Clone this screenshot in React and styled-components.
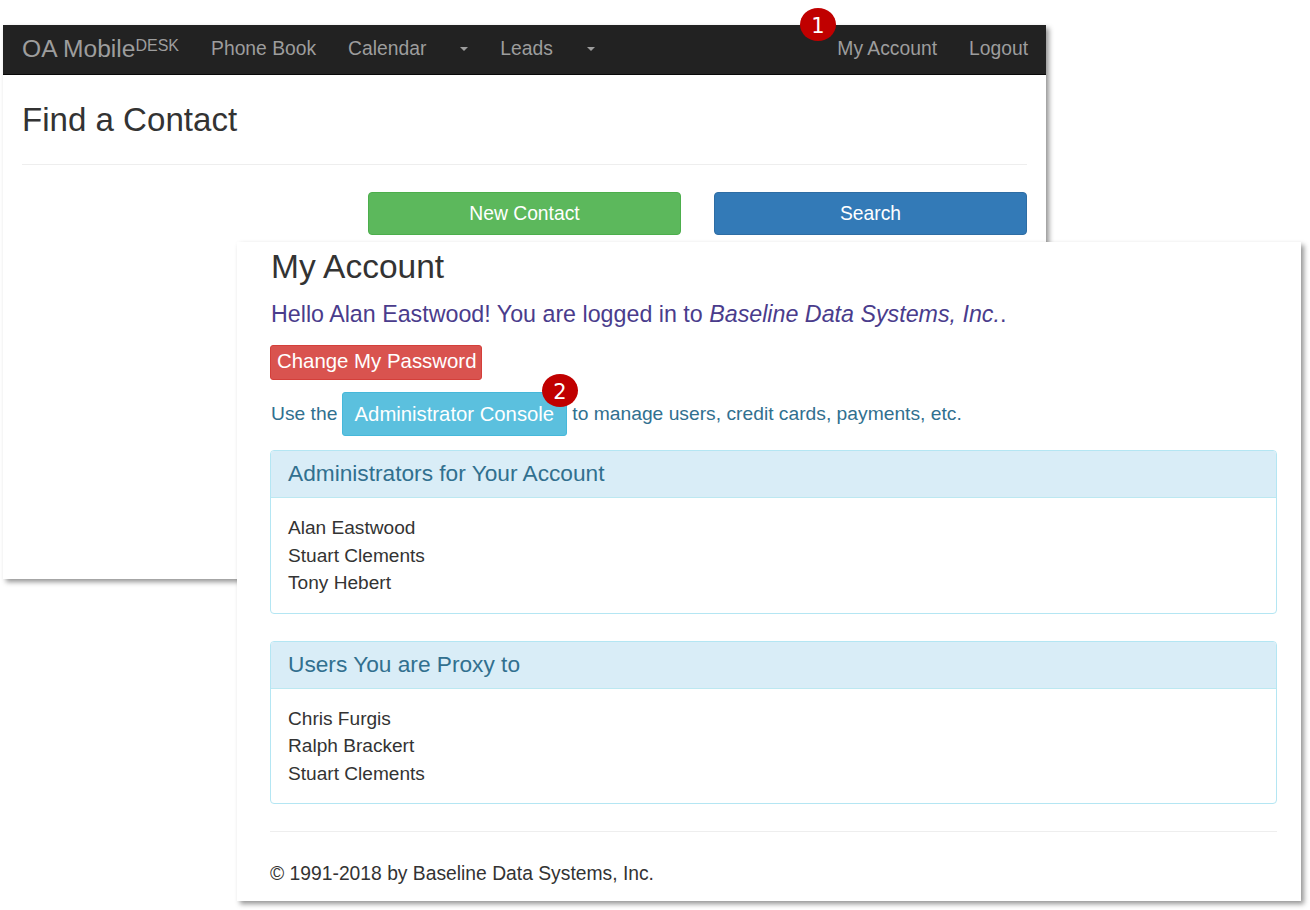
import React from "react";
import styled, { createGlobalStyle } from "styled-components";

const GlobalStyle = createGlobalStyle`
  html, body {
    margin: 0;
    padding: 0;
    background: #fff;
  }
  body {
    font-family: "Liberation Sans", Arial, sans-serif;
    color: #333;
  }
`;

const Desktop = styled.div`
  position: relative;
  width: 1310px;
  height: 910px;
  overflow: hidden;
  background: #fff;
`;

const BackWindow = styled.div`
  position: absolute;
  left: 3px;
  top: 25px;
  width: 1043px;
  height: 554px;
  background: #fff;
  box-shadow: 3px 3px 5px rgba(0, 0, 0, 0.42);
`;

const FrontWindow = styled.div`
  position: absolute;
  left: 237px;
  top: 242px;
  width: 1064px;
  height: 659px;
  box-sizing: border-box;
  padding: 5px 24px 0 33px;
  background: #fff;
  box-shadow: 3px 3px 5px rgba(0, 0, 0, 0.42);
`;

const Navbar = styled.nav`
  display: flex;
  align-items: center;
  height: 50px;
  box-sizing: border-box;
  padding: 0 18px 2px 19px;
  background: #222;
  border-bottom: 1px solid #080808;
`;

const Brand = styled.span`
  font-size: 24.6px;
  color: #9d9d9d;
  margin-right: 32px;

  sup {
    font-size: 16px;
    line-height: 0;
    vertical-align: 6px;
  }
`;

const NavLink = styled.span`
  font-size: 19.3px;
  color: #9d9d9d;
  margin-left: ${(props) => props.$gap || 0}px;
`;

const Caret = styled.span`
  width: 0;
  height: 0;
  margin-left: 34px;
  margin-right: 32px;
  border-top: 4px solid #9d9d9d;
  border-left: 4px solid transparent;
  border-right: 4px solid transparent;
`;

const Spacer = styled.div`
  flex: 1;
`;

const BackBody = styled.div`
  padding: 0 19px;
`;

const PageHeader = styled.h1`
  margin: 0;
  height: 90px;
  box-sizing: border-box;
  padding-top: 27px;
  font-size: 33.1px;
  line-height: 36px;
  font-weight: 400;
  color: #333;
  border-bottom: 1px solid #eee;
`;

const ButtonRow = styled.div`
  display: flex;
  justify-content: flex-end;
  gap: 33px;
  margin-top: 27px;
`;

const WideButton = styled.div`
  width: 313px;
  height: 43px;
  box-sizing: border-box;
  display: flex;
  align-items: center;
  justify-content: center;
  font-size: 19.3px;
  color: #fff;
  border-radius: 4px;
  background: ${(props) => props.$bg};
  border: 1px solid ${(props) => props.$border};
`;

const Heading = styled.h2`
  margin: 0 0 0 1px;
  font-size: 33.5px;
  line-height: 40px;
  font-weight: 400;
  color: #333;
`;

const Lead = styled.p`
  margin: 13px 0 0 1px;
  font-size: 23.25px;
  line-height: 28px;
  color: #4a3c8c;
`;

const DangerButton = styled.div`
  width: 212px;
  height: 35px;
  margin-top: 17px;
  padding-left: 6px;
  line-height: 31px;
  box-sizing: border-box;
  white-space: nowrap;
  font-size: 20.4px;
  color: #fff;
  background: #d9534f;
  border: 1px solid #d43f3a;
  border-radius: 3px;
`;

const ConsoleRow = styled.div`
  display: flex;
  align-items: center;
  gap: 5px;
  margin: 12px 0 0 1px;
  font-size: 19.25px;
  color: #31708f;
`;

const ConsoleButton = styled.div`
  display: flex;
  align-items: center;
  justify-content: center;
  width: 225px;
  height: 44px;
  box-sizing: border-box;
  padding-right: 1px;
  font-size: 20.3px;
  color: #fff;
  background: #5bc0de;
  border: 1px solid #46b8da;
  border-radius: 3px;
`;

const Panel = styled.section`
  margin-top: ${(props) => props.$top}px;
  border: 1px solid #b4e6f3;
  border-radius: 4px;
  overflow: hidden;
`;

const PanelHeading = styled.div`
  height: 47px;
  box-sizing: border-box;
  padding: 0 17px 1px;
  display: flex;
  align-items: center;
  font-size: 22.7px;
  color: #31708f;
  background: #d9edf7;
  border-bottom: 1px solid #bce8f1;
`;

const PanelBody = styled.div`
  padding: 16px 17px 16px;
  font-size: 19.1px;
  line-height: 27.5px;
  color: #333;
`;

const Divider = styled.hr`
  margin: 27px 0 0;
  border: 0;
  border-top: 1px solid #eee;
`;

const Footer = styled.p`
  margin: 30px 0 0;
  font-size: 19.3px;
  line-height: 24px;
  color: #333;
`;

const Badge = styled.span`
  position: absolute;
  left: ${(props) => props.$left}px;
  top: ${(props) => props.$top}px;
  width: 36px;
  height: 33px;
  padding-top: 2px;
  box-sizing: border-box;
  border-radius: 50%;
  background: #c00000;
  color: #fff;
  display: flex;
  align-items: center;
  justify-content: center;
  font-family: "DejaVu Sans", sans-serif;
  font-size: 21px;
`;

const App = () => {
  return (
    <Desktop>
      <GlobalStyle />
      <BackWindow>
        <Navbar>
          <Brand>
            OA Mobile<sup>DESK</sup>
          </Brand>
          <NavLink>Phone Book</NavLink>
          <NavLink $gap={32}>Calendar</NavLink>
          <Caret />
          <NavLink>Leads</NavLink>
          <Caret />
          <Spacer />
          <NavLink>My Account</NavLink>
          <NavLink $gap={32}>Logout</NavLink>
        </Navbar>
        <BackBody>
          <PageHeader>Find a Contact</PageHeader>
          <ButtonRow>
            <WideButton $bg="#5cb85c" $border="#4cae4c">
              New Contact
            </WideButton>
            <WideButton $bg="#337ab7" $border="#2e6da4">
              Search
            </WideButton>
          </ButtonRow>
        </BackBody>
      </BackWindow>
      <FrontWindow>
        <Heading>My Account</Heading>
        <Lead>
          Hello Alan Eastwood! You are logged in to <em>Baseline Data Systems, Inc.</em>.
        </Lead>
        <DangerButton>Change My Password</DangerButton>
        <ConsoleRow>
          Use the
          <ConsoleButton>Administrator Console</ConsoleButton>
          to manage users, credit cards, payments, etc.
        </ConsoleRow>
        <Panel $top={14}>
          <PanelHeading>Administrators for Your Account</PanelHeading>
          <PanelBody>
            Alan Eastwood
            <br />
            Stuart Clements
            <br />
            Tony Hebert
          </PanelBody>
        </Panel>
        <Panel $top={27}>
          <PanelHeading>Users You are Proxy to</PanelHeading>
          <PanelBody>
            Chris Furgis
            <br />
            Ralph Brackert
            <br />
            Stuart Clements
          </PanelBody>
        </Panel>
        <Divider />
        <Footer>© 1991-2018 by Baseline Data Systems, Inc.</Footer>
      </FrontWindow>
      <Badge $left={800} $top={8}>1</Badge>
      <Badge $left={542} $top={374}>2</Badge>
    </Desktop>
  );
};

export default App;
